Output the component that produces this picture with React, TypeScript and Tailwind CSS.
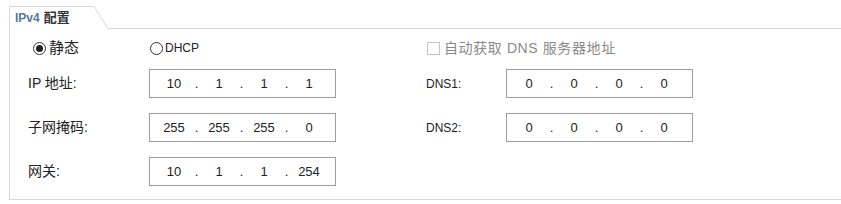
import React from "react";

const FONT = { fontFamily: '"Liberation Sans", "Noto Sans CJK SC", sans-serif' };

function IpBox({ parts, pad }: { parts: string[]; pad: string }) {
  return (
    <div className={`flex h-[29px] w-[187px] items-center border border-[#9e9e9e] bg-white text-[13px] ${pad}`}>
      {parts.map((p, i) => (
        <React.Fragment key={i}>
          {i > 0 && <span className="w-[9px] text-center">.</span>}
          <span className="w-[36px] text-center">{p}</span>
        </React.Fragment>
      ))}
    </div>
  );
}

function Radio({ checked }: { checked?: boolean }) {
  return (
    <span className="flex h-[13px] w-[13px] items-center justify-center rounded-full border border-[#333] bg-white">
      {checked && <span className="h-[7px] w-[7px] rounded-full bg-[#222]" />}
    </span>
  );
}

export default function App() {
  return (
    <div className="h-[204px] w-[841px] bg-white pl-[9px] pt-[6px] text-[14px] text-[#222]" style={FONT}>
      {/* pestaña */}
      <div className="flex h-[23px]">
        <div className="flex w-[85px] items-center border-l border-t border-[#d8d8d8] pl-[5px] text-[12px] font-bold">
          <span className="text-[#56799f]">IPv4</span>
          <span className="ml-[4px] text-[13px] text-[#333]">配置</span>
        </div>
        <svg width="14" height="23" className="shrink-0">
          <line x1="0" y1="0.5" x2="14" y2="22.5" stroke="#d8d8d8" strokeWidth="1" />
        </svg>
        <div className="flex-1 border-b border-[#d8d8d8]" />
      </div>

      <div className="h-[171px] border-b border-l border-[#d8d8d8] pl-[18px] pt-[10px]">
        <div className="flex h-[18px] items-center">
          <div className="flex w-[398px] items-center">
            <label className="ml-[5px] flex w-[117px] items-center gap-[3px]">
              <Radio checked />
              <span className="text-[15px]">静态</span>
            </label>
            <label className="flex items-center gap-[2px] text-[12px]">
              <Radio />
              <span>DHCP</span>
            </label>
          </div>
          <label className="ml-[1px] flex items-center gap-[4px] text-[#8a8a8a]">
            <span className="h-[13px] w-[13px] border border-[#c4c4c4] bg-white" />
            <span className="tracking-[0.6px]">自动获取 DNS 服务器地址</span>
          </label>
        </div>

        <div className="mt-[12px] flex flex-col gap-[15px]">
          <div className="flex">
            <div className="flex w-[398px] items-center">
              <span className="w-[121px]">IP 地址:</span>
              <IpBox parts={["10", "1", "1", "1"]} pad="pl-[6px]" />
            </div>
            <div className="flex items-center">
              <span className="w-[80px] text-[12px]">DNS1:</span>
              <IpBox parts={["0", "0", "0", "0"]} pad="pl-[4px]" />
            </div>
          </div>
          <div className="flex">
            <div className="flex w-[398px] items-center">
              <span className="w-[121px]">子网掩码:</span>
              <IpBox parts={["255", "255", "255", "0"]} pad="pl-[6px]" />
            </div>
            <div className="flex items-center">
              <span className="w-[80px] text-[12px]">DNS2:</span>
              <IpBox parts={["0", "0", "0", "0"]} pad="pl-[4px]" />
            </div>
          </div>
          <div className="flex">
            <div className="flex w-[398px] items-center">
              <span className="w-[121px]">网关:</span>
              <IpBox parts={["10", "1", "1", "254"]} pad="pl-[6px]" />
            </div>
          </div>
        </div>
      </div>
    </div>
  );
}
